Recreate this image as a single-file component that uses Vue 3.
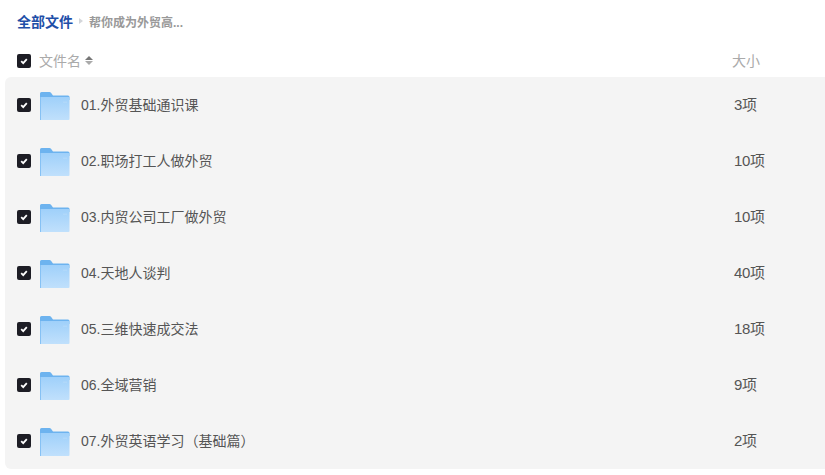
<template>
  <div class="page">
    <div class="crumbs">
      <span class="crumb-root">全部文件</span>
      <span class="crumb-arrow"></span>
      <span class="crumb-current">帮你成为外贸高...</span>
    </div>

    <div class="head">
      <span class="check">
        <svg viewBox="0 0 14 14" width="14" height="14">
          <path d="M4.200 7.200 6.200 9.200 9.800 5.200" fill="none" stroke="#fff" stroke-width="1.800" />
        </svg>
      </span>
      <span class="head-name">文件名</span>
      <span class="sort">
        <i class="sort-up"></i>
        <i class="sort-down"></i>
      </span>
      <span class="head-size">大小</span>
    </div>

    <div class="list">
      <div v-for="file in files" :key="file.name" class="row">
        <span class="check">
          <svg viewBox="0 0 14 14" width="14" height="14">
            <path d="M4.200 7.200 6.200 9.200 9.800 5.200" fill="none" stroke="#fff" stroke-width="1.800" />
          </svg>
        </span>
        <svg class="folder" viewBox="0 0 30 28" width="30" height="28">
          <defs>
            <linearGradient id="folderFront" x1="0" y1="0" x2="0" y2="1">
              <stop offset="0" stop-color="#9fd0fa" />
              <stop offset="1" stop-color="#c0e0fc" />
            </linearGradient>
          </defs>
          <path d="M0 1.500A1.500 1.500 0 0 1 1.500 0h8a2 2 0 0 1 1.500.7l2 2.800h15a1.500 1.500 0 0 1 1.500 1.500v3H0z" fill="#6db3ef" />
          <path d="M0 5h28.500a1 1 0 0 1 1 1v21a1 1 0 0 1-1 1H1a1 1 0 0 1-1-1z" fill="url(#folderFront)" />
          <rect x="23" y="9.500" width="4" height="1.500" fill="#b0d8fa" />
          <rect x="0" y="5" width="1" height="23" fill="#86c1f4" />
        </svg>
        <span class="name">{{ file.name }}</span>
        <span class="size">{{ file.size }}</span>
      </div>
    </div>
  </div>
</template>

<script setup>
const files = [
  { name: "01.外贸基础通识课", size: "3项" },
  { name: "02.职场打工人做外贸", size: "10项" },
  { name: "03.内贸公司工厂做外贸", size: "10项" },
  { name: "04.天地人谈判", size: "40项" },
  { name: "05.三维快速成交法", size: "18项" },
  { name: "06.全域营销", size: "9项" },
  { name: "07.外贸英语学习（基础篇）", size: "2项" },
];
</script>

<style>
html,
body {
  background: #fff;
  overflow: hidden;
}
</style>

<style scoped>
.page {
  width: 825px;
  height: 475px;
  font-family: "Microsoft YaHei", "Liberation Sans", "Noto Sans CJK SC", sans-serif;
  overflow: hidden;
}

.crumbs {
  display: flex;
  align-items: center;
  height: 44px;
  padding-left: 17px;
  padding-bottom: 2px;
  box-sizing: border-box;
}

.crumb-root {
  font-size: 14px;
  font-weight: 700;
  color: #1f4fa8;
}

.crumb-arrow {
  width: 0;
  height: 0;
  margin: 0 6px;
  border-left: 4px solid #d4d6da;
  border-top: 3.500px solid transparent;
  border-bottom: 3.500px solid transparent;
}

.crumb-current {
  font-size: 12px;
  font-weight: 700;
  color: #999;
}

.head {
  display: flex;
  align-items: center;
  height: 33px;
  padding-left: 17px;
}

.head-name {
  margin-left: 8px;
  padding-bottom: 2px;
  font-size: 14px;
  color: #aaa;
}

.sort {
  display: flex;
  flex-direction: column;
  gap: 1px;
  margin-left: 4px;
}

.sort-up {
  border-bottom: 4px solid #777;
  border-left: 4px solid transparent;
  border-right: 4px solid transparent;
}

.sort-down {
  border-top: 4px solid #aaa;
  border-left: 4px solid transparent;
  border-right: 4px solid transparent;
}

.head-size {
  margin-left: auto;
  width: 93px;
  padding-bottom: 2px;
  font-size: 14px;
  color: #aaa;
}

.check {
  display: flex;
  flex: none;
  width: 14px;
  height: 14px;
  border-radius: 2px;
  background: #1d1d25;
}

.list {
  margin-left: 5px;
  background: #f4f4f4;
  border-radius: 6px 0 0 6px;
}

.row {
  display: flex;
  align-items: center;
  height: 56px;
  padding-left: 12px;
}

.folder {
  flex: none;
  margin-left: 9px;
  margin-top: 2px;
}

.name {
  margin-left: 11px;
  padding-bottom: 2px;
  font-size: 14px;
  color: #555;
}

.size {
  margin-left: auto;
  width: 91px;
  padding-bottom: 4px;
  font-size: 15px;
  letter-spacing: -0.300px;
  color: #555;
}
</style>
